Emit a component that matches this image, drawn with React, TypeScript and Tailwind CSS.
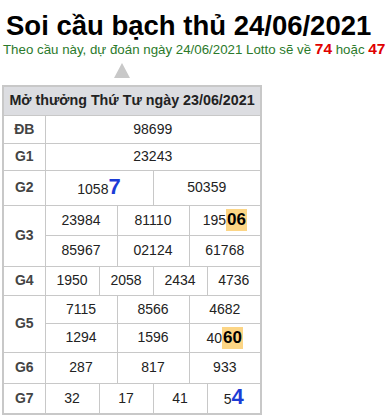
import React from "react";

const td = "border border-[#c8c8c8] p-0 text-center text-[14px] text-[#222]";
const th = "border border-[#c8c8c8] p-0 text-center text-[14px] font-bold text-[#444]";

// last digits that make up the predicted pair
const Blue = ({ children }: { children: React.ReactNode }) => (
  <b className="text-[22px] leading-none text-[#1c3cd6]">{children}</b>
);

const Hot = ({ children }: { children: React.ReactNode }) => (
  <b className="inline-block bg-[#fcd585] px-[1px] text-[17px] leading-[22px] text-black">
    {children}
  </b>
);

export default function App() {
  return (
    <div className="h-[418px] w-[386px] overflow-hidden bg-white font-['Liberation_Sans',Arial,sans-serif]">
      <h1 className="ml-[6px] mt-[11px] whitespace-nowrap text-[27.5px] font-bold leading-[30px] text-black">
        Soi cầu bạch thủ 24/06/2021
      </h1>
      <p className="ml-[3px] whitespace-nowrap text-[13.3px] leading-[16px] text-[#2b7a2b]">
        Theo cầu này, dự đoán ngày 24/06/2021 Lotto sẽ về{" "}
        <b className="text-[15.5px] text-[#e00000]">74</b> hoặc{" "}
        <b className="text-[15.5px] text-[#e00000]">47</b>
      </p>
      <div className="ml-[114px] mt-[5px] h-0 w-0 border-x-[8px] border-b-[15px] border-x-transparent border-b-[#c8c8c8]" />

      <table className="ml-[2px] mt-[7px] w-[259px] table-fixed border-collapse border-2 border-[#c8c8c8]">
        <colgroup>
          <col className="w-[42px]" />
          {Array.from({ length: 12 }).map((_, i) => (
            <col key={i} className="w-[18px]" />
          ))}
        </colgroup>
        <tbody>
          <tr className="h-[29px] bg-[#dcdde1]">
            <th colSpan={13} className="whitespace-nowrap border border-[#c8c8c8] p-0 text-center text-[14.3px] font-bold text-[#222]">
              Mở thưởng Thứ Tư ngày 23/06/2021
            </th>
          </tr>
          <tr className="h-[28px]">
            <td className={th}>ĐB</td>
            <td colSpan={12} className={td}>98699</td>
          </tr>
          <tr className="h-[27px]">
            <td className={th}>G1</td>
            <td colSpan={12} className={td}>23243</td>
          </tr>
          <tr className="h-[35px]">
            <td className={th}>G2</td>
            <td colSpan={6} className={td}>
              1058<Blue>7</Blue>
            </td>
            <td colSpan={6} className={td}>50359</td>
          </tr>
          <tr className="h-[30px]">
            <td rowSpan={2} className={th}>G3</td>
            <td colSpan={4} className={td}>23984</td>
            <td colSpan={4} className={td}>81110</td>
            <td colSpan={4} className={td}>
              195<Hot>06</Hot>
            </td>
          </tr>
          <tr className="h-[31px]">
            <td colSpan={4} className={td}>85967</td>
            <td colSpan={4} className={td}>02124</td>
            <td colSpan={4} className={td}>61768</td>
          </tr>
          <tr className="h-[29px]">
            <td className={th}>G4</td>
            <td colSpan={3} className={td}>1950</td>
            <td colSpan={3} className={td}>2058</td>
            <td colSpan={3} className={td}>2434</td>
            <td colSpan={3} className={td}>4736</td>
          </tr>
          <tr className="h-[28px]">
            <td rowSpan={2} className={th}>G5</td>
            <td colSpan={4} className={td}>7115</td>
            <td colSpan={4} className={td}>8566</td>
            <td colSpan={4} className={td}>4682</td>
          </tr>
          <tr className="h-[29px]">
            <td colSpan={4} className={td}>1294</td>
            <td colSpan={4} className={td}>1596</td>
            <td colSpan={4} className={td}>
              40<Hot>60</Hot>
            </td>
          </tr>
          <tr className="h-[31px]">
            <td className={th}>G6</td>
            <td colSpan={4} className={td}>287</td>
            <td colSpan={4} className={td}>817</td>
            <td colSpan={4} className={td}>933</td>
          </tr>
          <tr className="h-[31px]">
            <td className={th}>G7</td>
            <td colSpan={3} className={td}>32</td>
            <td colSpan={3} className={td}>17</td>
            <td colSpan={3} className={td}>41</td>
            <td colSpan={3} className={td}>
              5<Blue>4</Blue>
            </td>
          </tr>
        </tbody>
      </table>
    </div>
  );
}
